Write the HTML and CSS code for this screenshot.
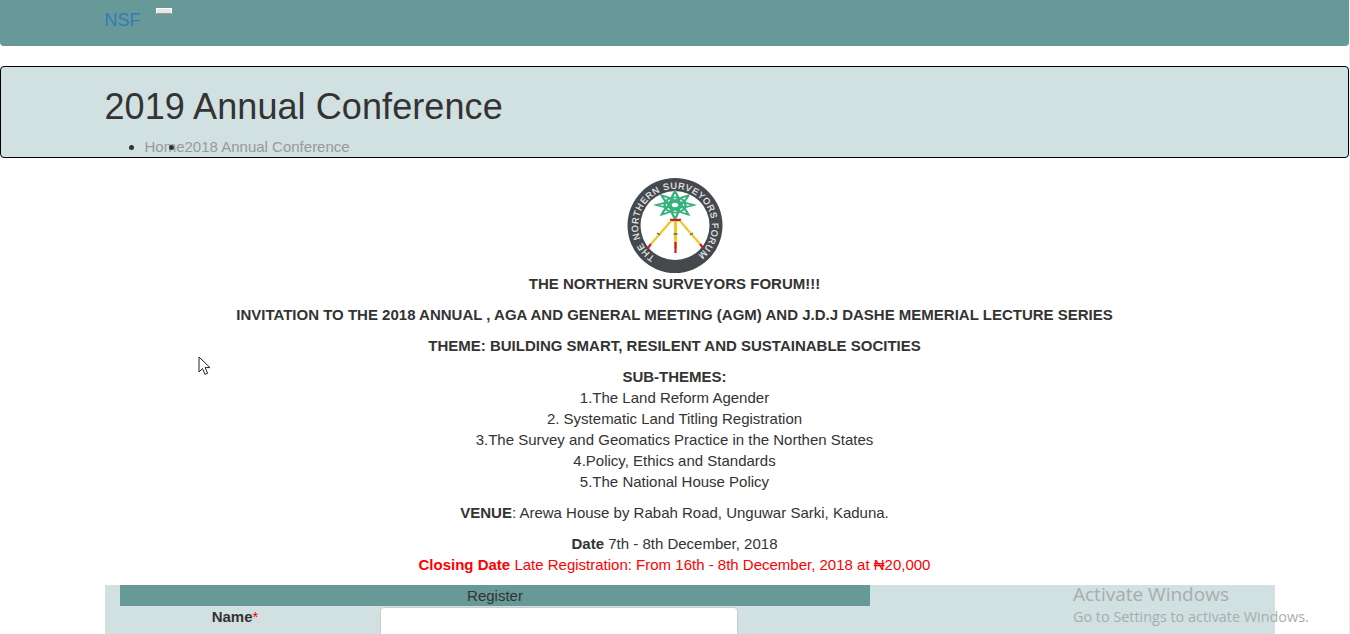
FILE: index.html
```html
<!DOCTYPE html>
<html lang="en">
<head>
  <meta charset="utf-8" />
  <title>2019 Annual Conference</title>
  <link rel="stylesheet" href="styles.css">
</head>
<body>
  <nav class="navbar">
    <div class="container nav-inner">
      <a class="brand" href="#">NSF</a>
      <button class="toggle" type="button"></button>
    </div>
  </nav>

  <header class="page-head">
    <div class="container">
      <h1>2019 Annual Conference</h1>
      <ul class="crumbs">
        <li><a href="#">Home</a><span class="dot"></span>2018 Annual Conference</li>
      </ul>
    </div>
  </header>

  <main class="container intro">
    <svg class="logo" viewBox="0 0 96 96" width="96" height="96" role="img" aria-label="The Northern Surveyors Forum logo">
      <defs>
        <path id="ring" d="M 28 79 A 37 37 0 1 1 68 79"></path>
        <path id="petal" d="M-19 0 Q0 -9 19 0 Q0 9 -19 0 Z"></path>
      </defs>
      <circle cx="48" cy="47.5" r="47.5" fill="#45494d"></circle>
      <circle cx="48" cy="47.5" r="34.5" fill="#fff"></circle>
      <text class="logo-text"><textPath href="#ring" textLength="186" lengthAdjust="spacing">THE NORTHERN SURVEYORS FORUM</textPath></text>
      <!-- knot -->
      <g transform="translate(48 27) scale(1 .72)" fill="none" stroke="#35b27d" stroke-width="2.4">
        <use href="#petal"></use>
        <use href="#petal" transform="rotate(45)"></use>
        <use href="#petal" transform="rotate(90)"></use>
        <use href="#petal" transform="rotate(135)"></use>
        <circle r="6"></circle>
        <circle r="10.5"></circle>
      </g>
      <!-- tripod -->
      <path d="M43 42 H54" stroke="#c8202a" stroke-width="2.5"></path>
      <path d="M44 43 L24 66 M53 43 L73 66" stroke="#f2c81e" stroke-width="2.2"></path>
      <path d="M48.5 43 V70" stroke="#f2c81e" stroke-width="3"></path>
      <path d="M24 66 L21 70 M73 66 L76 70 M48.5 64 V75" stroke="#c8202a" stroke-width="2.2"></path>
      <path d="M46.5 56 H50.5 M30 55 L33 57 M66 55 L63 57" stroke="#666" stroke-width="1.5"></path>
    </svg>
    <p class="strong first">THE NORTHERN SURVEYORS FORUM!!!</p>
    <p class="strong">INVITATION TO THE 2018 ANNUAL , AGA AND GENERAL MEETING (AGM) AND J.D.J DASHE MEMERIAL LECTURE SERIES</p>
    <p class="strong">THEME: BUILDING SMART, RESILENT AND SUSTAINABLE SOCITIES</p>
    <p>
      <b>SUB-THEMES:</b><br>
      1.The Land Reform Agender<br>
      2. Systematic Land Titling Registration<br>
      3.The Survey and Geomatics Practice in the Northen States<br>
      4.Policy, Ethics and Standards<br>
      5.The National House Policy
    </p>
    <p><b>VENUE</b>: Arewa House by Rabah Road, Unguwar Sarki, Kaduna.</p>
    <p>
      <b>Date</b> 7th - 8th December, 2018<br>
      <span class="late"><b>Closing Date</b> Late Registration: From 16th - 8th December, 2018 at ₦20,000</span>
    </p>
  </main>

  <section class="form-wrap">
    <div class="form-col">
      <div class="form-title">Register</div>
      <div class="form-row">
        <label class="form-label" for="name">Name<span class="req">*</span></label>
        <input class="form-input" id="name" type="text">
      </div>
    </div>
  </section>

  <svg class="cursor" viewBox="0 0 14 20" width="14" height="20" aria-hidden="true">
    <path d="M1 1 V16 L4.5 12.6 L7 18.4 L9.6 17.3 L7.1 11.6 H12 Z" fill="#fff" stroke="#222" stroke-width="1"></path>
  </svg>

  <div class="activate">
    <div class="activate-title">Activate Windows</div>
    <div class="activate-sub">Go to Settings to activate Windows.</div>
  </div>
</body>
</html>
```

FILE: styles.css
```css
html { background: #f1f1f1; height: 100%; overflow: hidden; }
body { font-family: "Liberation Sans", Arial, sans-serif; font-size: 15px; line-height: 21px; color: #333; background: #fff; margin: 0 1px 0 0; height: 634px; overflow: hidden; position: relative; }
a { text-decoration: none; }

.container { width: 1170px; margin: 0 auto; padding: 0 15px; box-sizing: border-box; }

.navbar { height: 46px; background: #679999; border-radius: 0 0 4px 4px; margin-bottom: 20px; }
.nav-inner { display: flex; align-items: flex-start; }
.brand { color: #337ab7; font-size: 18px; line-height: 20px; margin-top: 10px; }
.toggle { width: 16px; height: 6px; margin: 8px 0 0 15px; padding: 0; background: #e6e6e6; border: 1px solid #fff; border-bottom-color: #999; border-radius: 1px; }

.page-head { height: 92px; box-sizing: border-box; background: #d1e0e0; border: 1px solid #000; border-radius: 4px; margin-bottom: 20px; }
.page-head h1 { font-size: 36px; font-weight: 400; line-height: 40px; letter-spacing: 0.09px; margin: 20px 0 0; }
.crumbs { margin: 9px 0 0; padding-left: 40px; color: #999; }
.crumbs a { color: #999; }
.crumbs li::marker { color: #333; }
.crumbs li { position: relative; }
.dot { position: absolute; left: 24px; top: 9px; width: 5px; height: 5px; border-radius: 50%; background: #333; }

.intro { text-align: center; }
.intro p { margin: 0 0 10px; }
.logo { display: block; margin: 0 auto -1px; }
.logo-text { font-size: 9px; font-weight: 400; stroke: #eceded; stroke-width: 0.2px; fill: #eceded; }
.intro .first { margin-top: 0; }
.strong { font-weight: 700; }
.late { color: #f00; }

.form-wrap { width: 1170px; margin: 0 0 0 105px; background: #d1e0e0; padding: 0 15px; box-sizing: border-box; height: 60px; }
.form-col { width: 750px; }
.form-title { height: 21px; line-height: 21px; background: #679999; text-align: center; }
.form-row { display: grid; grid-template-columns: 230px 358px; column-gap: 29.5px; margin-top: 1px; }
.form-label { text-align: center; font-weight: 700; margin-top: -1px; }
.req { color: #f00; font-weight: 400; }
.form-input { height: 34px; padding: 6px 12px; box-sizing: border-box; background: #fff; border: 1px solid #ccc; border-radius: 4px; }

.cursor { position: absolute; left: 198px; top: 356px; }

.activate { position: absolute; left: 1073px; top: 582px; color: #a9acad; }
.activate-title { font-family: "Open Sans", sans-serif; font-size: 19px; line-height: 24px; }
.activate-sub { font-family: "Open Sans", sans-serif; font-size: 14.4px; line-height: 22px; }
```
